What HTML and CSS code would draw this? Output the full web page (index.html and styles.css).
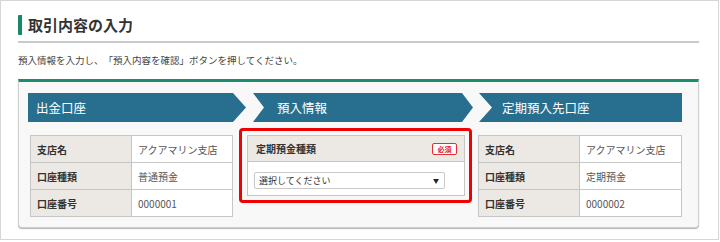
FILE: index.html
```html
<!DOCTYPE html>
<html lang="ja">
<head>
<meta charset="utf-8">
<link rel="stylesheet" href="styles.css">
</head>
<body>
<div class="frame">
  <div class="title-wrap">
    <h1 class="title">取引内容の入力</h1>
  </div>
  <p class="desc">預入情報を入力し、「預入内容を確認」ボタンを押してください。</p>
  <div class="panel">
    <div class="steps">
      <div class="step step-first">出金口座</div>
      <div class="step step-mid">預入情報</div>
      <div class="step step-last">定期預入先口座</div>
    </div>
    <div class="cols">
      <div class="info info-left">
        <div class="lbl">支店名</div><div class="val">アクアマリン支店</div>
        <div class="lbl">口座種類</div><div class="val">普通預金</div>
        <div class="lbl">口座番号</div><div class="val">0000001</div>
      </div>
      <div class="highlight">
        <div class="form-box">
          <div class="form-head">
            <span class="form-label">定期預金種類</span>
            <span class="badge">必須</span>
          </div>
          <div class="form-body">
            <div class="select"><span>選択してください</span><span class="arrow">▼</span></div>
          </div>
        </div>
      </div>
      <div class="info info-right">
        <div class="lbl">支店名</div><div class="val">アクアマリン支店</div>
        <div class="lbl">口座種類</div><div class="val">定期預金</div>
        <div class="lbl">口座番号</div><div class="val">0000002</div>
      </div>
    </div>
  </div>
</div>
</body>
</html>
```

FILE: styles.css
```css
* { box-sizing: border-box; }
html, body { margin: 0; padding: 0; background: #fff; }
body {
  font-family: "Noto Sans CJK JP", "Noto Sans", sans-serif;
  color: #333;
  text-spacing-trim: space-all;
}
.frame {
  width: 719px;
  height: 240px;
  border: 1px solid #d6d6d6;
  padding: 0 19px 0 17px;
}
.title-wrap {
  padding-top: 14px;
  padding-bottom: 6px;
  border-bottom: 2px solid #cacaca;
}
.title {
  margin: 0;
  height: 20px;
  line-height: 20px;
  border-left: 4px solid #16896a;
  border-radius: 1px;
  padding-left: 6px;
  font-size: 15px;
  font-weight: bold;
  color: #333;
}
.desc {
  margin: 10px 0 0;
  font-size: 9.5px;
  line-height: 14px;
  color: #444;
}
.panel {
  margin-top: 12px;
  border: 1px solid #cfcfcf;
  border-top: 3px solid #1c8c6c;
  border-radius: 0 0 4px 4px;
  background: #f8f8f8;
  box-shadow: 0 1px 1px rgba(0,0,0,0.3);
  padding: 11px 16px 10px 9px;
}
.steps {
  display: flex;
  height: 29px;
}
.step {
  background: #286f8f;
  color: #fff;
  font-size: 12.5px;
  line-height: 29px;
  height: 29px;
}
.step-first {
  width: 218px;
  padding-left: 8px;
  clip-path: polygon(0 0, 205px 0, 100% 50%, 205px 100%, 0 100%);
}
.step-mid {
  width: 220px;
  margin-left: 7px;
  padding-left: 24px;
  clip-path: polygon(0 0, 209px 0, 100% 50%, 209px 100%, 0 100%, 11px 50%);
}
.step-last {
  width: 203px;
  margin-left: 6px;
  padding-left: 23px;
  clip-path: polygon(0 0, 100% 0, 100% 100%, 0 100%, 13px 50%);
}
.cols {
  display: flex;
  align-items: flex-start;
  margin-top: 6px;
}
.info {
  display: grid;
  grid-template-columns: 101px 1fr;
  grid-auto-rows: 27px;
  margin-top: 7px;
  border-top: 1px solid #c6c6c6;
  border-left: 1px solid #c6c6c6;
  font-size: 10px;
}
.info-left { width: 203px; margin-left: 2px; }
.info-right { width: 204px; margin-left: 6px; }
.lbl, .val {
  border-right: 1px solid #c6c6c6;
  border-bottom: 1px solid #c6c6c6;
  display: flex;
  align-items: center;
  padding-left: 6px;
}
.lbl {
  background: #ece8e4;
  font-weight: bold;
  color: #333;
}
.val {
  background: #fff;
  color: #555;
}
.highlight {
  width: 233px;
  margin-left: 6px;
  border: 3px solid #f00000;
  border-radius: 4px;
  padding: 4px 4px 4px 5px;
}
.form-box {
  border: 1px solid #c6c6c6;
  background: #fff;
}
.form-head {
  height: 26px;
  background: #ece8e4;
  border-bottom: 1px solid #c6c6c6;
  display: flex;
  align-items: center;
  justify-content: space-between;
  padding: 0 7px 0 8px;
}
.form-label {
  font-size: 10px;
  font-weight: bold;
  color: #333;
}
.badge {
  width: 25px;
  height: 12px;
  border: 1px solid #e03030;
  border-radius: 2px;
  background: #fff;
  color: #e02020;
  font-size: 7px;
  font-weight: bold;
  line-height: 10px;
  text-align: center;
}
.form-body {
  padding: 10px 0 6px 6px;
}
.select {
  width: 191px;
  height: 17px;
  border: 1px solid #c8c8c8;
  border-radius: 2px;
  background: #fff;
  display: flex;
  align-items: center;
  justify-content: space-between;
  padding: 0 5px 0 4px;
  font-size: 9px;
  color: #333;
}
.arrow {
  font-size: 6px;
  color: #222;
}
```
